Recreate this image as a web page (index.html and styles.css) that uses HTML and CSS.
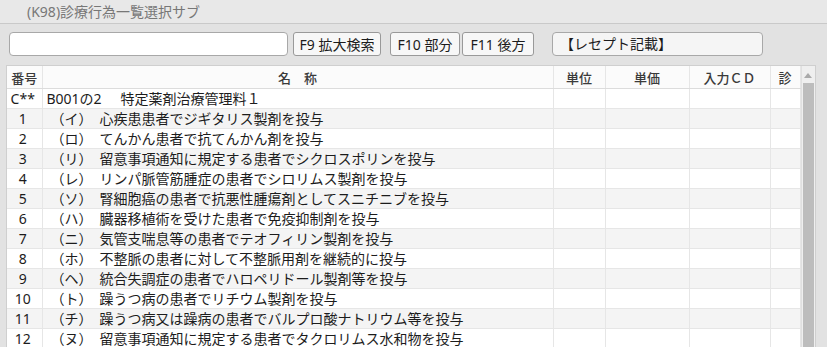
FILE: index.html
```html
<!DOCTYPE html>
<html lang="ja">
<head>
    <meta charset="UTF-8">
    <title>(K98)診療行為一覧選択サブ</title>
    <link rel="stylesheet" href="styles.css">
</head>
<body>
    <div class="titlebar">(K98)診療行為一覧選択サブ</div>
    <div class="toolbar">
        <input class="search" type="text">
        <button class="fbtn f9">F9 拡大検索</button>
        <button class="fbtn f10">F10 部分</button>
        <button class="fbtn f11">F11 後方</button>
        <div class="receipt">【レセプト記載】</div>
    </div>
    <div class="list">
        <table class="grid">
            <colgroup>
                <col class="c-no">
                <col class="c-name">
                <col class="c-unit">
                <col class="c-price">
                <col class="c-cd">
                <col class="c-shin">
            </colgroup>
            <thead>
                <tr>
                    <th>番号</th>
                    <th>名　称</th>
                    <th>単位</th>
                    <th>単価</th>
                    <th>入力ＣＤ</th>
                    <th>診</th>
                </tr>
            </thead>
            <tbody>
                <tr><td class="no">C**</td><td class="name code-row"><span class="code">B001の2</span>特定薬剤治療管理料１</td><td></td><td></td><td></td><td></td></tr>
                <tr><td class="no">1</td><td class="name">（イ）　心疾患患者でジギタリス製剤を投与</td><td></td><td></td><td></td><td></td></tr>
                <tr><td class="no">2</td><td class="name">（ロ）　てんかん患者で抗てんかん剤を投与</td><td></td><td></td><td></td><td></td></tr>
                <tr><td class="no">3</td><td class="name">（リ）　留意事項通知に規定する患者でシクロスポリンを投与</td><td></td><td></td><td></td><td></td></tr>
                <tr><td class="no">4</td><td class="name">（レ）　リンパ脈管筋腫症の患者でシロリムス製剤を投与</td><td></td><td></td><td></td><td></td></tr>
                <tr><td class="no">5</td><td class="name">（ソ）　腎細胞癌の患者で抗悪性腫瘍剤としてスニチニブを投与</td><td></td><td></td><td></td><td></td></tr>
                <tr><td class="no">6</td><td class="name">（ハ）　臓器移植術を受けた患者で免疫抑制剤を投与</td><td></td><td></td><td></td><td></td></tr>
                <tr><td class="no">7</td><td class="name">（ニ）　気管支喘息等の患者でテオフィリン製剤を投与</td><td></td><td></td><td></td><td></td></tr>
                <tr><td class="no">8</td><td class="name">（ホ）　不整脈の患者に対して不整脈用剤を継続的に投与</td><td></td><td></td><td></td><td></td></tr>
                <tr><td class="no">9</td><td class="name">（ヘ）　統合失調症の患者でハロペリドール製剤等を投与</td><td></td><td></td><td></td><td></td></tr>
                <tr><td class="no">10</td><td class="name">（ト）　躁うつ病の患者でリチウム製剤を投与</td><td></td><td></td><td></td><td></td></tr>
                <tr><td class="no">11</td><td class="name">（チ）　躁うつ病又は躁病の患者でバルプロ酸ナトリウム等を投与</td><td></td><td></td><td></td><td></td></tr>
                <tr><td class="no">12</td><td class="name">（ヌ）　留意事項通知に規定する患者でタクロリムス水和物を投与</td><td></td><td></td><td></td><td></td></tr>
            </tbody>
        </table>
        <div class="scrollbar">
            <div class="arrow"></div>
            <div class="thumb"></div>
        </div>
    </div>
</body>
</html>
```

FILE: styles.css
```css
:root {
    --panel: #e2e2e2;
    --line: #e6e6e6;
    --stripe: #f4f4f4;
    --text: #1c1c1c;
}
body {
    margin: 0;
    background-color: var(--panel);
    font-family: "Noto Sans", "Noto Sans CJK JP", sans-serif;
    color: var(--text);
    overflow: hidden;
    height: 347px;
}
.titlebar {
    height: 23px;
    line-height: 23px;
    padding-left: 27px;
    font-size: 14px;
    color: #777;
    background-color: #e8e8e8;
    border-bottom: 1px solid #c9c9c9;
}
.toolbar {
    display: flex;
    align-items: center;
    padding: 8px 0 0 9px;
    height: 24px;
}
.search {
    width: 279px;
    height: 24px;
    box-sizing: border-box;
    margin: 0;
    border: 1px solid #a8a8a8;
    border-radius: 4px;
    background-color: #fff;
}
.fbtn {
    height: 24px;
    box-sizing: border-box;
    margin: 0;
    padding: 0;
    border: 1px solid #999;
    border-radius: 3px;
    background-color: #f7f7f7;
    font-family: "Noto Sans", "Noto Sans CJK JP", sans-serif;
    font-size: 14px;
    color: var(--text);
}
.f9 { width: 88px; margin-left: 5px; }
.f10 { width: 70px; margin-left: 9px; }
.f11 { width: 72px; margin-left: 2px; }
.receipt {
    width: 211px;
    height: 24px;
    box-sizing: border-box;
    margin-left: 18px;
    padding-left: 7px;
    line-height: 22px;
    font-size: 14px;
    border: 1px solid #a8a8a8;
    border-radius: 4px;
    background-color: #f5f5f5;
}
.list {
    display: flex;
    margin: 9px 0 0 6px;
    width: 810px;
    height: 282px;
    border: 1px solid #cfcfcf;
    border-bottom: none;
    box-sizing: border-box;
    background-color: #fff;
    overflow: hidden;
}
.grid {
    border-collapse: collapse;
    table-layout: fixed;
    width: 793px;
    font-size: 14px;
}
.c-no { width: 35px; }
.c-name { width: 511px; }
.c-unit { width: 52px; }
.c-price { width: 84px; }
.c-cd { width: 81px; }
.c-shin { width: 30px; }
.grid th {
    height: 22px;
    padding: 0;
    font-size: 13px;
    font-weight: 500;
    color: #3a3a3a;
    background-color: #fbfbfb;
    border-right: 1px solid var(--line);
    border-bottom: 1px solid #dcdcdc;
}
.grid td {
    height: 19px;
    padding: 0;
    line-height: 19px;
    white-space: nowrap;
    overflow: hidden;
    border-right: 1px solid var(--line);
    border-bottom: 1px solid var(--line);
}
.grid tbody tr:nth-child(even) td {
    background-color: var(--stripe);
}
.grid .no {
    text-align: center;
    padding-right: 3px;
}
.grid .name {
    padding-left: 8px;
}
.grid .code-row {
    padding-left: 4px;
}
.code {
    display: inline-block;
    width: 74px;
}
.scrollbar {
    flex: 1;
    display: flex;
    flex-direction: column;
    align-items: center;
    background-color: #efefef;
    border-left: 1px solid #e0e0e0;
}
.arrow {
    margin-top: 7px;
    width: 0;
    height: 0;
    border-left: 4px solid transparent;
    border-right: 4px solid transparent;
    border-bottom: 5px solid #aaa;
}
.thumb {
    margin-top: 5px;
    width: 11px;
    flex: 1;
    background-color: #bdbdbd;
}
```
